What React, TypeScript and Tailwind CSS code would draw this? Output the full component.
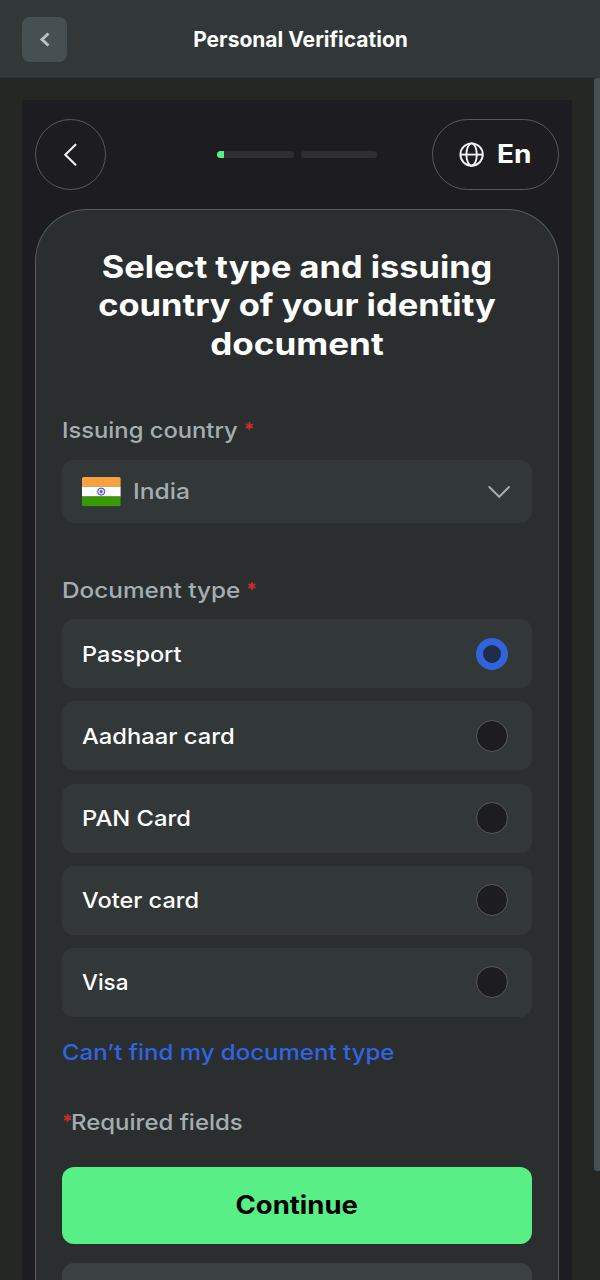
import React, { useState } from "react";

interface DocumentType {
  id: string;
  label: string;
  className: string;
}

const documentTypes: DocumentType[] = [
  { id: "passport", label: "Passport", className: "scale-x-[1.065]" },
  { id: "aadhaar", label: "Aadhaar card", className: "scale-x-[1.08]" },
  { id: "pan", label: "PAN Card", className: "scale-x-[1.08]" },
  { id: "voter", label: "Voter card", className: "scale-x-[1.07]" },
  { id: "visa", label: "Visa", className: "scale-x-[1.02]" },
];

const IndiaFlag = () => (
  <svg width="39" height="30" viewBox="0 0 39 30" className="shrink-0">
    <defs>
      <clipPath id="flag">
        <rect width="38.6" height="29.3" rx="1.5" />
      </clipPath>
    </defs>
    <g clipPath="url(#flag)">
      <rect width="39" height="9.7" fill="#f9a03f" />
      <rect y="9.7" width="39" height="9.8" fill="#ffffff" />
      <rect y="19.5" width="39" height="10" fill="#389b06" />
    </g>
    <circle cx="19.2" cy="14.6" r="3.6" fill="#d9d9f4" stroke="#4a48ad" strokeWidth="1" />
    <circle cx="19.2" cy="14.6" r="1.3" fill="#4a48ad" />
  </svg>
);

const GlobeIcon = () => (
  <svg
    width="26"
    height="26"
    viewBox="0 0 26 26"
    fill="none"
    stroke="#f2f2f2"
    strokeWidth="1.9"
    className="shrink-0"
  >
    <circle cx="12.6" cy="12.6" r="11.2" />
    <ellipse cx="12.6" cy="12.6" rx="5.2" ry="11.2" />
    <path d="M1.4 12.6h22.4" />
  </svg>
);

const Required = () => (
  <span className="text-[19px] leading-8 font-bold text-[#c92d2b]">*</span>
);

const App = () => {
  const [selected, setSelected] = useState("passport");

  return (
    <div className="flex h-[1280px] w-[600px] flex-col overflow-hidden bg-[#252725] font-['Inter',sans-serif]">
      <header className="grid h-[78px] shrink-0 grid-cols-[45px_1fr_45px] items-center border-b border-[#2d3130] bg-[#323737] px-[22px] pt-0.5">
        <button className="flex size-[45px] items-center justify-center rounded-lg bg-[#465052]">
          <svg width="12" height="16" viewBox="0 0 12 16" fill="none" stroke="#b9c0c1" strokeWidth="3">
            <path d="M9.5 1.5 3 7.5l6.5 6" />
          </svg>
        </button>
        <h1 className="pt-px pl-px text-center text-[21px] font-bold whitespace-nowrap text-white">
          Personal Verification
        </h1>
      </header>

      <div className="flex min-h-0 flex-1 justify-between pl-[22px]">
        <main className="mt-[22px] flex w-[550px] flex-col bg-[#1d1c20] px-[13px]">
          <div className="mt-[19px] flex h-[71px] shrink-0 items-center justify-between">
            <button className="flex size-[71px] items-center justify-center rounded-full border border-[#59585b]">
              <svg
                width="16"
                height="24"
                viewBox="0 0 16 24"
                fill="none"
                stroke="#f0f0f0"
                strokeWidth="2.1"
                strokeLinecap="round"
              >
                <path d="M12.5 1.7 2.3 11.7l10.2 10" />
              </svg>
            </button>
            <div className="ml-[56px] flex gap-[7px]">
              <div className="h-[7px] w-[77px] overflow-hidden rounded-full bg-[#2f2e33]">
                <div className="h-full w-[7px] bg-[#58ef86]" />
              </div>
              <div className="h-[7px] w-[76px] rounded-full bg-[#2f2e33]" />
            </div>
            <button className="flex h-[71px] w-[127px] items-center gap-[12.5px] rounded-full border border-[#59585b] pl-[25.5px] text-[25px] font-bold text-white">
              <GlobeIcon />
              <span className="origin-left scale-x-[1.12]">En</span>
            </button>
          </div>

          <section className="mt-[19px] flex min-h-0 flex-1 flex-col rounded-t-[52px] border border-b-0 border-[#575b5c] bg-[#2a2e2e] px-[26px]">
            <h2 className="mt-[38px] text-center text-[31px] leading-[38.4px] font-bold text-white">
              <span className="block scale-x-[1.108] whitespace-nowrap">Select type and issuing</span>
              <span className="block scale-x-[1.112] whitespace-nowrap">country of your identity</span>
              <span className="block scale-x-[1.13] whitespace-nowrap">document</span>
            </h2>

            <label className="mt-[51px] flex h-8 items-start gap-[19px] text-[22px] leading-8 font-medium whitespace-nowrap text-[#a4aeb2]">
              <span className="origin-left scale-x-[1.08]">Issuing country</span>
              <Required />
            </label>
            <button className="mt-[14px] flex h-[63px] shrink-0 items-center rounded-xl bg-[#323737] pr-[21px] pl-5">
              <IndiaFlag />
              <span className="ml-3 origin-left scale-x-[1.12] text-[22px] font-medium text-[#a4aeb2]">
                India
              </span>
              <svg
                width="24"
                height="16"
                viewBox="0 0 24 16"
                fill="none"
                stroke="#a4aeb2"
                strokeWidth="2"
                strokeLinecap="round"
                className="ml-auto"
              >
                <path d="M2.3 3l9.9 9.8L22 3" />
              </svg>
            </button>

            <label className="mt-[51px] flex h-8 items-start gap-[23px] text-[22px] leading-8 font-medium whitespace-nowrap text-[#a4aeb2]">
              <span className="origin-left scale-x-[1.105]">Document type</span>
              <Required />
            </label>
            <div className="mt-[13px] flex flex-col gap-[13.2px]">
              {documentTypes.map((type) => (
                <button
                  key={type.id}
                  onClick={() => setSelected(type.id)}
                  className="flex h-[69px] items-center justify-between rounded-xl bg-[#323737] pr-6 pl-5 text-[22px] font-medium text-white"
                >
                  <span className={`origin-left pt-px ${type.className}`}>{type.label}</span>
                  {selected === type.id ? (
                    <span className="size-8 rounded-full border-[7px] border-[#3164da] bg-[#202c49]" />
                  ) : (
                    <span className="size-8 rounded-full border border-[#59585b] bg-[#1d1c20]" />
                  )}
                </button>
              ))}
            </div>

            <a className="mt-[19px] origin-left scale-x-[1.092] text-[22px] leading-8 font-medium whitespace-nowrap text-[#3164e3]">
              Can’t find my document type
            </a>
            <p className="mt-[38px] flex h-8 items-start text-[22px] leading-8 font-medium whitespace-nowrap text-[#a4aeb2]">
              <Required />
              <span className="-ml-0.5 origin-left scale-x-[1.09]">Required fields</span>
            </p>

            <button className="mt-[29px] h-[77px] shrink-0 rounded-xl bg-[#58ef86] text-[25px] font-bold text-black">
              <span className="inline-block scale-x-110">Continue</span>
            </button>
            <button className="mt-[19px] h-[77px] shrink-0 rounded-xl bg-[#3b4040]" />
          </section>
        </main>
        <div className="h-[1093px] w-[6px] rounded-l-[3px] bg-[#465052]" />
      </div>
    </div>
  );
};

export default App;
